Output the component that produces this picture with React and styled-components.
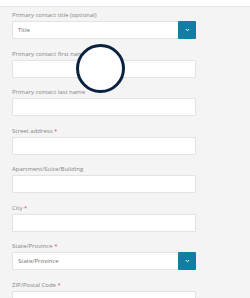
import React from "react";
import styled, { createGlobalStyle } from "styled-components";

const Global = createGlobalStyle`
  html, body { margin: 0; padding: 0; background: #f4f4f4; }
  body { font-family: "Open Sans", "Liberation Sans", sans-serif; }
  * { box-sizing: border-box; }
`;

const Page = styled.div`
  position: relative;
  width: 250px;
  height: 298px;
  overflow: hidden;
  background: #f4f4f4;
`;

const TopBar = styled.div`
  height: 7px;
  background: #ffffff;
  border-bottom: 1px solid #e4e4e4;
`;

const Form = styled.div`
  display: flex;
  flex-direction: column;
  gap: 10.5px;
  padding: 4px 0 0 12px;
  width: 196px;
`;

const Field = styled.div`
  display: flex;
  flex-direction: column;
  gap: 2px;
`;

const Label = styled.div`
  font-size: 6px;
  line-height: 8px;
  color: #858585;
  white-space: nowrap;
`;

const Star = styled.span`
  color: #d9468f;
`;

const Box = styled.div`
  height: 18px;
  display: flex;
  align-items: center;
  background: #ffffff;
  border: 1px solid #e3e3e3;
  border-radius: 1px;
  box-shadow: 0 0 1px rgba(0, 0, 0, 0.04);
`;

const Value = styled.span`
  flex: 1;
  padding-left: 5px;
  font-size: 6px;
  color: #707070;
`;

const Caret = styled.div`
  width: 18px;
  height: 18px;
  margin: -1px -1px -1px 0;
  background: #0f7fa3;
  border-radius: 1px;
  display: flex;
  align-items: center;
  justify-content: center;
`;

const Cursor = styled.div`
  position: absolute;
  left: 76px;
  top: 44px;
  width: 49px;
  height: 49px;
  border-radius: 50%;
  border: 3px solid #0b2140;
  background: #ffffff;
`;

const Chevron = () => (
  <svg width="5" height="4" viewBox="0 0 5 4">
    <path d="M0.8 1 L2.5 2.8 L4.2 1" fill="none" stroke="#ffffff" strokeWidth="1" />
  </svg>
);

const fields = [
  { label: "Primary contact title (optional)", select: "Title" },
  { label: "Primary contact first name" },
  { label: "Primary contact last name" },
  { label: "Street address", req: true },
  { label: "Apartment/Suite/Building" },
  { label: "City", req: true },
  { label: "State/Province", req: true, select: "State/Province" },
  { label: "ZIP/Postal Code", req: true },
];

export default function App() {
  return (
    <Page>
      <Global />
      <TopBar />
      <Form>
        {fields.map((f) => (
          <Field key={f.label}>
            <Label>
              {f.label}
              {f.req && <Star> *</Star>}
            </Label>
            <Box>
              {f.select ? (
                <>
                  <Value>{f.select}</Value>
                  <Caret>
                    <Chevron />
                  </Caret>
                </>
              ) : null}
            </Box>
          </Field>
        ))}
      </Form>
      <Cursor />
    </Page>
  );
}
